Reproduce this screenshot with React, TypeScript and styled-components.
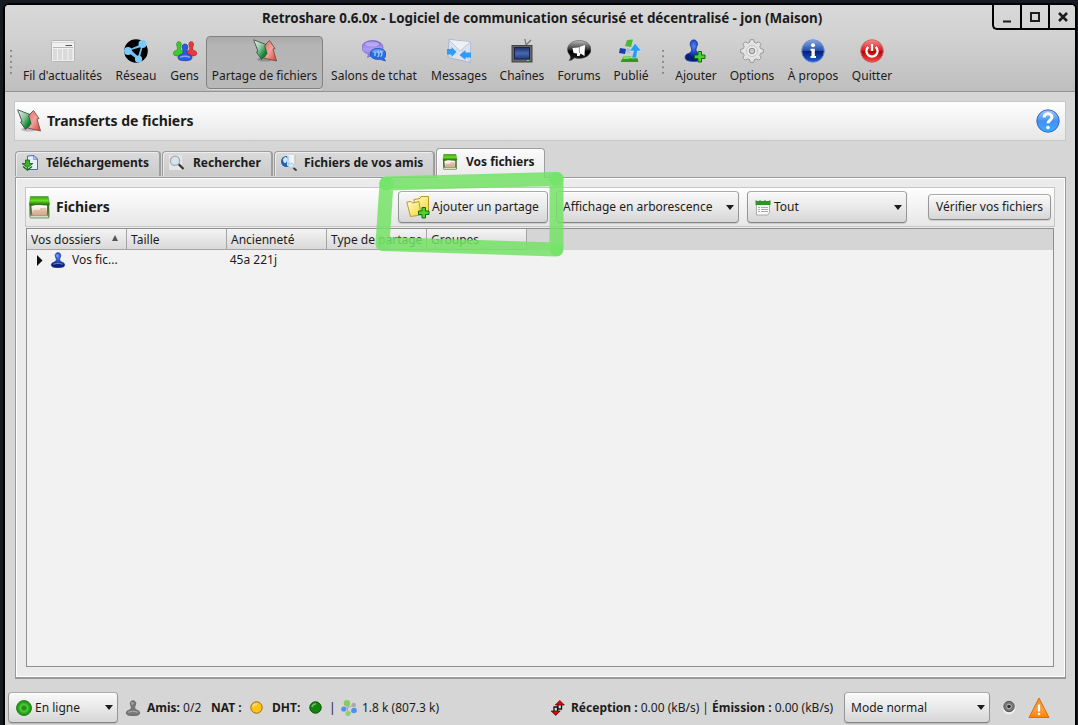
import React from "react";
import styled, { createGlobalStyle, css } from "styled-components";

const Global = createGlobalStyle`
  * { box-sizing: border-box; }
  html, body { margin: 0; padding: 0; background: #161b21; overflow: hidden; }
  body { font: 12px/16px "Noto Sans", sans-serif; color: #1c1c1c; }
  svg { display: block; flex: none; }
`;

const Desktop = styled.div`
  width: 1078px;
  height: 725px;
  padding: 3px 1px 0 3px;
  background: #161b21;
`;
const Window = styled.div`
  height: 722px;
  border: 2px solid #000;
  border-bottom: 0;
  border-radius: 6px 6px 0 0;
  background: #d6d6d6;
  overflow: hidden;
  display: flex;
  flex-direction: column;
`;
const Top = styled.div`
  height: 87px;
  flex: none;
  background: linear-gradient(#d8d8d8, #d2d2d2 35%, #bebebe);
  border-bottom: 1px solid #949494;
`;
const TitleBar = styled.div`
  height: 26px;
  display: flex;
  align-items: flex-start;
`;
const Title = styled.div`
  flex: 1;
  padding: 5px 0 0 257px;
  font-size: 13.39px;
  font-weight: 700;
  white-space: nowrap;
`;
const Controls = styled.div`
  display: flex;
  height: 25px;
  border: solid #000;
  border-width: 0 0 2px 2px;
  border-radius: 0 0 0 5px;
`;
const Control = styled.div`
  width: 28px;
  display: grid;
  place-items: center;
  & + & { border-left: 2px solid #000; }
  &:first-child { width: 26px; }
  &:last-child { width: 27px; }
`;
const Tools = styled.div`
  display: flex;
  height: 60px;
  padding: 5px 0 0 1px;
`;
const Grip = styled.div<{ $w: number; $x: number }>`
  width: ${p => p.$w}px;
  height: 27px;
  margin-top: 13px;
  background: radial-gradient(circle at ${p => p.$x}px 2px, #888 1px, transparent 1.3px) 0 0 / 100% 5.5px;
`;
const Tool = styled.div<{ $w: number; $on?: boolean }>`
  width: ${p => p.$w}px;
  height: 53px;
  border: 1px solid transparent;
  border-radius: 4px;
  display: flex;
  flex-direction: column;
  align-items: center;
  gap: 5px;
  padding-top: 2px;
  white-space: nowrap;
  ${p => p.$on && css`
    background: linear-gradient(#a9a9a9, #b5b5b5 15%, #b8b8b8);
    border-color: #828282;
    box-shadow: 0 1px 0 #d8d8d8;
  `}
`;
const Main = styled.div`
  padding: 9px 9px 0;
  flex: 1;
  display: flex;
  flex-direction: column;
`;
const Panel = styled.div`
  height: 40px;
  flex: none;
  border: 1px solid #c7c7c7;
  background: linear-gradient(#fefefe, #e7e7e7);
  display: flex;
  align-items: center;
`;
const Heading = styled.div`
  font-size: 14px;
  font-weight: 700;
  letter-spacing: -0.04px;
  white-space: nowrap;
`;
const Tabs = styled.div`
  display: flex;
  align-items: flex-end;
  height: 36px;
  padding-left: 1px;
`;
const Tab = styled.div<{ $w: number; $on?: boolean; $gap?: number }>`
  width: ${p => p.$w}px;
  height: ${p => (p.$on ? 30 : 25)}px;
  margin: 0 1px ${p => (p.$on ? -1 : 1)}px 0;
  position: relative;
  z-index: 1;
  border: 1px solid #9e9e9e;
  border-bottom: 0;
  border-right-width: ${p => (p.$on ? 1 : 2)}px;
  border-radius: 4px 4px 0 0;
  background: ${p => (p.$on ? "linear-gradient(#fafafa, #ebebeb)" : "linear-gradient(#dadada, #cbcbcb)")};
  box-shadow: inset 1px 1px 0 #ffffff88;
  font-weight: 700;
  display: flex;
  align-items: center;
  padding: 0 0 3px ${p => (p.$on ? 5 : 6)}px;
  gap: ${p => p.$gap ?? 7}px;
  white-space: nowrap;
`;
const Pane = styled.div`
  width: 1051px;
  height: 502px;
  flex: none;
  margin-left: 1px;
  border: 1px solid #9a9a9a;
  border-bottom: 2px solid #999;
  box-shadow: inset 0 0 0 1px #fff;
  background: #ebebeb;
  padding: 9px 9px;
`;
const FilesPanel = styled(Panel)`
  width: 1030px;
  margin-bottom: 1px;
  padding: 0 3px 0 2px;
`;
const Button = styled.div<{ $w: number; $h?: number; $gap?: number; $pad?: number; $inner?: number }>`
  width: ${p => p.$w}px;
  height: ${p => p.$h ?? 32}px;
  margin-left: ${p => p.$gap ?? 0}px;
  flex: none;
  border: 1px solid #979797;
  border-color: #aaa #979797 #848484;
  border-radius: 4px;
  background: linear-gradient(#f9f9f9, #e9e9e9 50%, #d6d6d6);
  box-shadow: inset 0 1px 0 #fff, 0 1px 1px #0002;
  display: flex;
  align-items: center;
  padding: 0 4px 0 ${p => p.$pad ?? 7}px;
  gap: ${p => p.$inner ?? 3}px;
  white-space: nowrap;
`;
const Caret = styled.i`
  margin-left: auto;
  border: solid transparent;
  border-width: 5px 4.5px 0;
  border-top-color: #1c1c1c;
`;
const Table = styled.div`
  width: 1028px;
  height: 439px;
  margin-left: 1px;
  border: 1px solid #8f8f8f;
  background: #f2f2f2;
`;
const HeadRow = styled.div`
  display: flex;
  height: 21px;
  background: #d5d5d5;
`;
const HeadCell = styled.div`
  width: 100px;
  padding: 3px 8px 0 4px;
  display: flex;
  justify-content: space-between;
  border-right: 1px solid #a5a5a5;
  border-bottom: 1px solid #a5a5a5;
  background: linear-gradient(#f4f4f4, #d9d9d9);
  white-space: nowrap;
`;
const Row = styled.div`
  display: flex;
  align-items: center;
  height: 20px;
  padding-left: 10px;
`;
const Age = styled.span` margin-left: 112px; `;
const Spacer = styled.div` flex: 1; `;
const Status = styled.div`
  display: flex;
  align-items: center;
  height: 31px;
  flex: none;
  margin: 0 0 2px;
  padding-left: 3px;
  white-space: nowrap;
`;
const Item = styled.span<{ $w: number }>`
  width: ${p => p.$w}px;
  flex: none;
  display: flex;
  align-items: center;
  white-space: pre;
`;
const Marker = styled.svg`
  position: absolute;
  z-index: 2;
  left: 370px;
  top: 165px;
  pointer-events: none;
`;
const HiddenSvg = styled.svg` position: absolute; `;

const Defs = () => (
  <HiddenSvg width="0" height="0">
    <defs>
      <linearGradient id="gGreen" x2="1" y2="1"><stop stopColor="#f0faf3" /><stop offset=".45" stopColor="#8cc49c" /><stop offset=".75" stopColor="#0a8a30" /><stop offset="1" stopColor="#0a8a30" /></linearGradient>
      <linearGradient id="gRed" x2="1" y2="1"><stop stopColor="#d86a60" /><stop offset=".5" stopColor="#f0a49c" /><stop offset="1" stopColor="#d93c2c" /></linearGradient>
      <radialGradient id="gBlue" cy=".3"><stop stopColor="#5a82f0" /><stop offset=".6" stopColor="#1e47c8" /><stop offset="1" stopColor="#0a2078" /></radialGradient>
      <linearGradient id="gInfo" x2="0" y2="1"><stop stopColor="#88a8ea" /><stop offset=".48" stopColor="#2450ad" /><stop offset=".5" stopColor="#061c70" /><stop offset="1" stopColor="#1c5fe0" /></linearGradient>
      <linearGradient id="gQuit" x2="0" y2="1"><stop stopColor="#f58e8e" /><stop offset=".48" stopColor="#d61c1c" /><stop offset=".5" stopColor="#b50000" /><stop offset="1" stopColor="#f74a4a" /></linearGradient>
      <linearGradient id="gHelp" x2="0" y2="1"><stop stopColor="#a5c8fb" /><stop offset=".5" stopColor="#4690f2" /><stop offset="1" stopColor="#3caaff" /></linearGradient>
      <linearGradient id="gFolder" x2="1" y2="1"><stop stopColor="#fffbd0" /><stop offset="1" stopColor="#f5d82c" /></linearGradient>
      <linearGradient id="gLid" x2="0" y2="1"><stop stopColor="#35a010" /><stop offset=".5" stopColor="#6edc2c" /><stop offset="1" stopColor="#1f7a08" /></linearGradient>
      <linearGradient id="gBox" x2="0" y2="1"><stop stopColor="#256b12" /><stop offset=".6" stopColor="#56753f" /><stop offset="1" stopColor="#7c9a6a" /></linearGradient>
      <linearGradient id="gPaper" x2="0" y2="1"><stop stopColor="#fffdf8" /><stop offset=".45" stopColor="#f5e6d8" /><stop offset="1" stopColor="#cf9f7e" /></linearGradient>
      <linearGradient id="gViolet" x2="0" y2="1"><stop stopColor="#7d63d5" /><stop offset=".5" stopColor="#ae9cf4" /><stop offset="1" stopColor="#8b7be0" /></linearGradient>
      <linearGradient id="gBlack" x2="0" y2="1"><stop stopColor="#bbb" /><stop offset=".4" stopColor="#444" /><stop offset=".55" stopColor="#000" /><stop offset="1" stopColor="#222" /></linearGradient>
      <linearGradient id="gWarn" x2="0" y2="1"><stop stopColor="#ef8c2d" /><stop offset=".6" stopColor="#f5a040" /><stop offset="1" stopColor="#ff7e00" /></linearGradient>
      <radialGradient id="gOnline"><stop stopColor="#0e7d08" /><stop offset=".3" stopColor="#29a51c" /><stop offset=".45" stopColor="#53c840" /><stop offset="1" stopColor="#0d8606" /></radialGradient>
      <linearGradient id="gScreen" x2="0" y2="1"><stop stopColor="#1d2f66" /><stop offset=".5" stopColor="#4a68b0" /><stop offset="1" stopColor="#20387c" /></linearGradient>
    </defs>
  </HiddenSvg>
);

const News = () => (
  <svg width="24" height="24" viewBox="0 0 24 24">
    <rect x=".5" y="1.5" width="23" height="21" rx="1" fill="#f1f1f1" stroke="#b5b5b5" />
    <path d="M1 3.500h22" stroke="#d8d8d8" />
    <path d="M14.500 6.500h6.500" stroke="#555" strokeWidth="1.200" />
    <path d="M2 8.500h20" stroke="#aaa" strokeWidth=".8" />
    <path d="M2 10h4v11H2zM7 10h4v11H7zM12 10h4.500v11H12zM17.500 10h4v11h-4z" fill="#dadada" />
  </svg>
);
const Network = () => (
  <svg width="24" height="24" viewBox="0 0 24 24">
    <circle cx="12" cy="12" r="11.800" fill="#000" />
    <path d="M3.500 12 18.500 5.500 14.500 20.500Z" fill="#6fc3f5" stroke="#6fc3f5" strokeWidth="1.500" strokeLinejoin="round" />
    <path d="M7 11 17 8 14 17.500Z" fill="#000" />
    <circle cx="4" cy="12" r="3.900" fill="#7ccaf7" /><circle cx="18.500" cy="5" r="4" fill="#7ccaf7" /><circle cx="14.500" cy="20" r="3.600" fill="#7ccaf7" />
  </svg>
);
const pawn = "M12 1c2.800 0 4.200 2 4.200 4.500 0 2-1.700 3-1.700 5.500 0 2 1 3.500 3.500 4.200 3 .8 4 2.300 4 4.300 0 3-4 4-10 4S2 22.500 2 19.500C2 17.500 3 16 6 15.200 8.500 14.500 9.500 13 9.500 11c0-2.500-1.700-3.500-1.700-5.500C7.800 3 9.200 1 12 1Z";
const Pawn = ({ size = 24, fill = "url(#gBlue)", stroke = "#13349c" }: { size?: number; fill?: string; stroke?: string }) => (
  <svg width={size} height={size} viewBox="0 0 24 24">
    <path d={pawn} fill={fill} stroke={stroke} />
    <ellipse cx="11" cy="5" rx="2" ry="2.500" fill="#fff" opacity=".3" />
    <path d="M5 18.500c3-2 11-2 14 0" stroke="#fff" opacity=".35" strokeWidth="2" fill="none" />
  </svg>
);
const People = () => (
  <svg width="24" height="24" viewBox="0 0 24 24">
    <g transform="translate(-.800 2) scale(.56 .64)"><path d={pawn} fill="#3ecb2c" stroke="#128708" /></g>
    <g transform="translate(11.500 2) scale(.56 .64)"><path d={pawn} fill="#e83a3a" stroke="#b01515" /></g>
    <g transform="translate(3.700 4.300) scale(.69 .74)"><path d={pawn} fill="#2b5be0" stroke="#1335b0" /><path d="M5 19c3-2 11-2 14 0" stroke="#fff" opacity=".45" strokeWidth="2" fill="none" /></g>
  </svg>
);
const Transfer = () => (
  <svg width="24" height="24" viewBox="0 0 24 24">
    <ellipse cx="12" cy="20.500" rx="8" ry="2" fill="#0003" />
    <path d="M16.500 1.500 22 9.500 20 10 23.500 22 10.500 19 12.500 17 11.500 8 10.500 7.500Z" fill="url(#gRed)" stroke="#7b4a48" strokeWidth=".9" />
    <path d="M.700.800 13 5.500 11.700 7 14 14.500 13.500 15.500 8.500 20.500 3.500 13 5 12.500Z" fill="url(#gGreen)" stroke="#435149" strokeWidth=".9" />
  </svg>
);
const Chat = () => (
  <svg width="24" height="24" viewBox="0 0 24 24">
    <path d="M10.500 1.500c6 0 10.500 3 10.500 7s-4 7.500-10.500 7.500l-5 2.500 1-3.500C2.500 14 0 11.500 0 8.500c0-4 4.500-7 10.500-7Z" fill="url(#gViolet)" stroke="#7864c8" strokeWidth=".7" />
    <ellipse cx="10" cy="5" rx="7" ry="2.500" fill="#fff" opacity=".35" />
    <path d="M16 9.500c4.500 0 8 2 8 5.500 0 2-1 3.500-2 4.500l1.500 2.500-5-1.500c-6 .5-10.500-2-10.500-5.500s3.500-5.500 8-5.500Z" fill="#286ee0" stroke="#164fc2" strokeWidth=".7" />
    <ellipse cx="16" cy="12.300" rx="6" ry="2" fill="#fff" opacity=".35" />
    <path d="M13 13v4M15.500 12.500c2 0 2 5 0 5M18 12.500c2.500 0 2.500 4.500.5 5" fill="none" stroke="#a9d4ff" strokeWidth="1.200" />
  </svg>
);
const Mail = () => (
  <svg width="24" height="24" viewBox="0 0 24 24">
    <path d="M2 .500 23.700 3v20.500L1 18.500Z" fill="#dde2f0" stroke="#a5adc6" strokeWidth=".8" />
    <path d="m2 1 11 11L23.500 3Z" fill="#eef0f8" />
    <path d="m2 1 11 11L23.500 3M1 18.500l9-8m13.500 13L15 11" stroke="#b9bfd4" fill="none" strokeWidth=".8" />
    <path d="M0 10h4.500V8l5 5-5 5v-2.500H0ZM24 13.500h-5.500v-2.500l-6 5 6 5V18.500H24Z" fill="#319af2" />
  </svg>
);
const Tv = () => (
  <svg width="24" height="24" viewBox="0 0 24 24">
    <path d="m16 6-1-6M16 6l5-5" stroke="#777" strokeWidth="1.200" />
    <rect x="2" y="6.500" width="20" height="16.500" fill="#666" stroke="#444" />
    <rect x="4.500" y="8.500" width="15" height="11.500" fill="url(#gScreen)" stroke="#18244c" />
    <path d="M17 21.500h2" stroke="#5cff42" />
  </svg>
);
const Forum = () => (
  <svg width="24" height="24" viewBox="0 0 24 24">
    <path d="M12.500 1.500c6.500 0 11.500 4 11.500 9s-5 9-12 9c-2 0-3.500-.2-5-.8-1 2-2.500 2.700-5 2.800 1.500-1.500 2-3 1-5C1.500 14.500.5 12.500.5 10.500c0-5 5-9 12-9Z" fill="url(#gBlack)" stroke="#444" strokeWidth=".5" />
    <path d="M5.500 9 11 8.500 18 6l-.5 11-4-2.500-1 2.500h-2.500v-2.500L6.500 14Z" fill="#fff" /><path d="m12.300 8 .2 6" stroke="#777" strokeWidth=".8" />
  </svg>
);
const Posted = () => (
  <svg width="24" height="24" viewBox="0 0 24 24">
    <path d="m8 1 6-.500-2 7.500-6-1Z" fill="#4eb43a" /><path d="m5 17 13 1 1.500 5H1.500Z" fill="#2c9c1c" /><path d="m5 17 13 1-9 2-5 0Z" fill="#a4e088" opacity=".8" />
    <path d="m1 9 6 1-1 5-6-1Z" fill="#183dab" /><path d="m8 9 4 1-1 4-4-1Z" fill="#9dbddd" />
    <path d="m16 4 6.500 8h-4l-1 7h-5l2-7h-4Z" fill="#2c9ded" stroke="#d2efff" strokeWidth=".6" />
  </svg>
);
const Plus = ({ x = 12, y = 12 }: { x?: number; y?: number }) => (
  <path transform={`translate(${x} ${y})`} d="M4 .500h3.500V4H11v3.500H7.500V11H4V7.500H.500V4H4Z" fill="#51cf35" stroke="#087008" />
);
const Add = () => (
  <svg width="24" height="24" viewBox="0 0 24 24">
    <path transform="translate(-.500 0) scale(.86 .95)" d={pawn} fill="url(#gBlue)" stroke="#13349c" />
    <Plus x={10} y={12} />
  </svg>
);
const Gear = () => (
  <svg width="24" height="24" viewBox="0 0 24 24">
    <path d="m10.300.700 3.400 0 .7 2.700 2 .8 2.400-1.400 2.400 2.400-1.400 2.400.8 2 2.700.7v3.400l-2.700.7-.8 2 1.400 2.400-2.400 2.400-2.400-1.400-2 .8-.7 2.700h-3.400l-.7-2.700-2-.8-2.400 1.400-2.400-2.400 1.400-2.400-.8-2-2.700-.7v-3.400l2.700-.7.8-2-1.400-2.400 2.400-2.400 2.400 1.400 2-.8Z" fill="#e4e4e4" stroke="#8a8a8a" strokeWidth=".8" strokeLinejoin="round" />
    <circle cx="12" cy="12" r="5.500" fill="#eee" stroke="#c4c4c4" /><circle cx="12" cy="12" r="2.800" fill="#ccc" stroke="#888" />
  </svg>
);
const Info = () => (
  <svg width="24" height="24" viewBox="0 0 24 24">
    <circle cx="12" cy="12" r="11.300" fill="url(#gInfo)" stroke="#7890ce" />
    <circle cx="12" cy="6.300" r="2" fill="#fff" /><path d="M9.500 9.800h4.300V17H15v2H9.500v-2h1v-5.200h-1Z" fill="#fff" />
  </svg>
);
const Quit = () => (
  <svg width="24" height="24" viewBox="0 0 24 24">
    <circle cx="12" cy="12" r="11.300" fill="url(#gQuit)" stroke="#c66" />
    <path d="M8.300 7.800a5.600 5.600 0 1 0 7.400 0M12 5v7" fill="none" stroke="#fff" strokeWidth="2.300" />
  </svg>
);
const Help = () => (
  <svg width="24" height="24" viewBox="0 0 24 24">
    <circle cx="12" cy="12" r="11.200" fill="url(#gHelp)" stroke="#3369c4" />
    <path d="M8.200 8.500C8 3.500 16 3.800 16 8.300c0 3-4 3-4 6" fill="none" stroke="#fff" strokeWidth="3" /><circle cx="12" cy="18.500" r="1.800" fill="#fff" />
  </svg>
);
const Download = () => (
  <svg width="16" height="16" viewBox="0 0 16 16">
    <path d="M5.500 1 12 .500 15.500 4v10.500h-10Z" fill="#e6effb" stroke="#5467b5" /><path d="M11.500 1v3.500h4Z" fill="#b3cdf0" stroke="#5467b5" strokeWidth=".5" />
    <path d="M3.500 5h4v3.500H11l-5.500 4L0 8.500h3.500Z" fill="#3fae30" stroke="#176c18" strokeWidth=".9" /><path d="m1 11.500 4.500 3.500 4.500-3.500" fill="none" stroke="#176c18" strokeWidth="1.400" />
  </svg>
);
const Search = () => (
  <svg width="16" height="16" viewBox="0 0 16 16">
    <rect width="13" height="15" fill="#e6e6e6" /><path d="m9.500 9 5 5" stroke="#333" strokeWidth="2.200" />
    <circle cx="6" cy="5.800" r="4.600" fill="#d6e4ee" stroke="#aaa" strokeWidth="1.300" />
  </svg>
);
const FriendFiles = () => (
  <svg width="16" height="16" viewBox="0 0 16 16">
    <circle cx="5.500" cy="6.500" r="5.500" fill="#2462b0" /><path d="M2 4.500c1.500-4 5-3 4 1S2 8.500 2 4.500Z" fill="#cde8fb" />
    <path d="M6.500 0H14l1 11-4 1.500-5-2Z" fill="#eff4f9" /><path d="M7.500 1v9" stroke="#b5d6ee" strokeWidth="1.500" /><path d="M14 0v11" stroke="#b8b0a8" />
    <circle cx="10" cy="10.500" r="2.600" fill="#cfe9f9" stroke="#9ab4c4" strokeWidth=".6" /><path d="m12.500 13 3 2.500" stroke="#333" strokeWidth="1.800" />
  </svg>
);
const Box = ({ size }: { size: number }) => (
  <svg width={size} height={size} viewBox="0 0 24 24">
    <path d="M1.500 7h20.500l.5 15-1 1.500h-19L1.500 22Z" fill="url(#gBox)" />
    <path d="M3.500 10.500 9 9l11 1-.5 10H4.500Z" fill="url(#gPaper)" />
    <path d="M6 14.500h6l1-2h6v7.500H6Z" fill="#d9ae90" opacity=".65" />
    <path d="M2.500.500h18.500L22.500 9h-21Z" fill="url(#gLid)" stroke="#2d7f18" strokeWidth=".5" />
    <path d="M2.500 20.500h18.500v2H2.500Z" fill="#d4dccb" />
  </svg>
);
const FolderAdd = () => (
  <svg width="24" height="24" viewBox="0 0 24 24">
    <path d="M8 4.500 14 3.500l1-2h7.500V18H9Z" fill="url(#gFolder)" stroke="#b08c1e" strokeWidth=".9" />
    <path d="M.800 7 5 6.500 6.500 8 13 6.500 15 20 4.500 21.500Z" fill="url(#gFolder)" stroke="#b69322" strokeWidth=".9" /><Plus x={12} y={12} />
  </svg>
);
const Calendar = () => (
  <svg width="16" height="17" viewBox="0 0 16 17">
    <path d="M1.500 2.500h13v11l-2 2.500h-11Z" fill="#fafafa" stroke="#999" strokeWidth=".8" /><path d="M.500 1.500h15V6H.500Z" fill="#259a1c" />
    <path d="M2 1.300h2M6 1.300h3M11 1.300h3" stroke="#e8e8e8" strokeWidth="1.500" /><path d="M3 8.500h2M6 8.500h7M3 10.500h2M6 10.500h7M3 12.500h2M6 12.500h7" stroke="#aaa" />
  </svg>
);
const Online = () => <svg width="16" height="16"><circle cx="8" cy="8" r="7.500" fill="url(#gOnline)" stroke="#2a8c24" /></svg>;
const Led = ({ c, s }: { c: string; s: string }) => (
  <svg width="13" height="13"><circle cx="6.500" cy="6.500" r="5.700" fill={c} stroke={s} /><path d="M3 6a4 4 0 0 1 4-3" fill="none" stroke="#fff" opacity=".45" strokeWidth="1.500" /></svg>
);
const Peers = () => (
  <svg width="16" height="16" viewBox="0 0 16 16">
    <path d="m6 3 1 11 6-4M3 9l10-4" stroke="#aaa" fill="none" /><circle cx="6" cy="3.200" r="3.200" fill="#82ce62" /><circle cx="12.800" cy="5" r="2.200" fill="#aaa" />
    <circle cx="2.800" cy="9" r="2.600" fill="#4e90f4" /><circle cx="13" cy="10.500" r="2.800" fill="#4e90f4" /><circle cx="7" cy="13.500" r="2.500" fill="#8fd16f" />
  </svg>
);
const Rates = () => (
  <svg width="14" height="16" viewBox="0 0 14 16">
    <path d="M7 4.500V9h3.500V4.500M3 11.500V7h3.500v4.500" fill="#ddd" stroke="#111" strokeWidth="1.300" />
    <path d="m8.800.500 4.500 4.500h-9Z" fill="#e00" stroke="#300" strokeWidth=".7" /><path d="m4.700 15.500 4.500-4.500h-9Z" fill="#e00" stroke="#300" strokeWidth=".7" />
  </svg>
);
const Knob = () => (
  <svg width="14" height="15"><circle cx="7" cy="8" r="6.500" fill="#eee" /><circle cx="7" cy="6.500" r="5.200" fill="#777" stroke="#555" /><circle cx="7" cy="6.500" r="2.300" fill="#333" stroke="#bbb" /></svg>
);
const Warning = () => (
  <svg width="22" height="22" viewBox="0 0 22 22">
    <path d="M11 1 21 20.500H1Z" fill="url(#gWarn)" stroke="#d4730e" strokeLinejoin="round" /><path d="M11 7.500v7" stroke="#fff" strokeWidth="2.200" /><circle cx="11" cy="17" r="1.300" fill="#fff" />
  </svg>
);

const tools: [string, number, React.ReactNode][] = [
  ["Fil d'actualités", 93, <News />], ["Réseau", 54, <Network />], ["Gens", 43, <People />], ["Partage de fichiers", 117, <Transfer />],
  ["Salons de tchat", 102, <Chat />], ["Messages", 68, <Mail />], ["Chaînes", 58, <Tv />], ["Forums", 56, <Forum />], ["Publié", 48, <Posted />],
];
const actions: [string, number, React.ReactNode][] = [
  ["Ajouter", 54, <Add />], ["Options", 58, <Gear />], ["À propos", 64, <Info />], ["Quitter", 54, <Quit />],
];

export default function App() {
  return (
    <Desktop>
      <Global />
      <Defs />
      <Window>
        <Top>
          <TitleBar>
            <Title>Retroshare 0.6.0x - Logiciel de communication sécurisé et décentralisé - jon (Maison)</Title>
            <Controls>
              <Control><svg width="10" height="12"><path d="M1 10.500h8" stroke="#1c1c1c" strokeWidth="2" /></svg></Control>
              <Control><svg width="10" height="10"><rect x="1" y="1" width="8" height="8" fill="none" stroke="#1c1c1c" strokeWidth="2" /></svg></Control>
              <Control><svg width="10" height="10"><path d="m1 1 8 8M9 1 1 9" stroke="#1c1c1c" strokeWidth="2.500" /></svg></Control>
            </Controls>
          </TitleBar>
          <Tools>
            <Grip $w={10} $x={5} />
            {tools.map(([name, w, icon]) => <Tool key={name} $w={w} $on={name === "Partage de fichiers"}>{icon}<span>{name}</span></Tool>)}
            <Grip $w={14} $x={8} />
            {actions.map(([name, w, icon]) => <Tool key={name} $w={w}>{icon}<span>{name}</span></Tool>)}
          </Tools>
        </Top>
        <Main>
          <Panel>
            <Item $w={32}><Item $w={2} /><Transfer /></Item>
            <Heading>Transferts de fichiers</Heading>
            <Spacer />
            <Item $w={29}><Help /></Item>
          </Panel>
          <Tabs>
            <Tab $w={146} $gap={8}><Download />Téléchargements</Tab>
            <Tab $w={111} $gap={8}><Search />Rechercher</Tab>
            <Tab $w={161}><FriendFiles />Fichiers de vos amis</Tab>
            <Tab $w={109} $gap={8} $on><Box size={16} />Vos fichiers</Tab>
          </Tabs>
          <Pane>
            <FilesPanel>
              <Item $w={28}><Box size={23} /></Item>
              <Item $w={342}><Heading>Fichiers</Heading></Item>
              <Button $w={150} $inner={2}><FolderAdd />Ajouter un partage</Button>
              <Button $w={183} $gap={8} $pad={6}>Affichage en arborescence<Caret /></Button>
              <Button $w={160} $gap={8}><Calendar />Tout<Caret /></Button>
              <Button $w={123} $h={26} $gap={21}>Vérifier vos fichiers</Button>
            </FilesPanel>
            <Table>
              <HeadRow>
                <HeadCell>Vos dossiers<svg width="6" height="14"><path d="m3 3 3 6H0Z" fill="#555" /></svg></HeadCell>
                <HeadCell>Taille</HeadCell><HeadCell>Ancienneté</HeadCell><HeadCell>Type de partage</HeadCell><HeadCell>Groupes</HeadCell>
              </HeadRow>
              <Row>
                <Item $w={13}><svg width="6" height="12"><path d="m0 1 5.500 5.500L0 12Z" fill="#111" /></svg></Item>
                <Item $w={22}><Pawn size={16} /></Item>
                <span>Vos fic...</span><Age>45a 221j</Age>
              </Row>
            </Table>
          </Pane>
        </Main>
        <Status>
          <Button $w={110} $h={31} $inner={3}><Online />En ligne<Caret /></Button>
          <Item $w={29}><Item $w={7} /><Pawn size={16} fill="#777" stroke="#555" /></Item>
          <Item $w={64}><b>Amis:</b> 0/2</Item>
          <Item $w={39}><b>NAT :</b></Item>
          <Item $w={22}><Led c="#ffc31a" s="#a36a00" /></Item>
          <Item $w={37}><b>DHT:</b></Item>
          <Item $w={20}><Led c="#12860b" s="#075005" /></Item>
          <Item $w={12}>|</Item>
          <Item $w={21}><Peers /></Item>
          <Item $w={189}>1.8 k (807.3 k)</Item>
          <Item $w={20}><Rates /></Item>
          <Item $w={273}><b>Réception :</b> 0.00 (kB/s) | <b>Émission :</b> 0.00 (kB/s)</Item>
          <Button $w={146} $h={31} $pad={6}>Mode normal<Caret /></Button>
          <Item $w={38}><Item $w={12} /><Knob /></Item>
          <Warning />
        </Status>
      </Window>
      <Marker width="205" height="100">
        <path d="M16.500 18.500 186.500 14V84.500L12.500 79Z" fill="none" stroke="#74e267" strokeOpacity=".86" strokeWidth="14" strokeLinecap="round" strokeLinejoin="round" />
        <g fill="#74e46a"><circle cx="16.500" cy="18.500" r="7" /><circle cx="186.500" cy="14" r="7" /><circle cx="186.500" cy="84.500" r="6.500" /><circle cx="13" cy="79" r="6" opacity=".5" /></g>
      </Marker>
    </Desktop>
  );
}
